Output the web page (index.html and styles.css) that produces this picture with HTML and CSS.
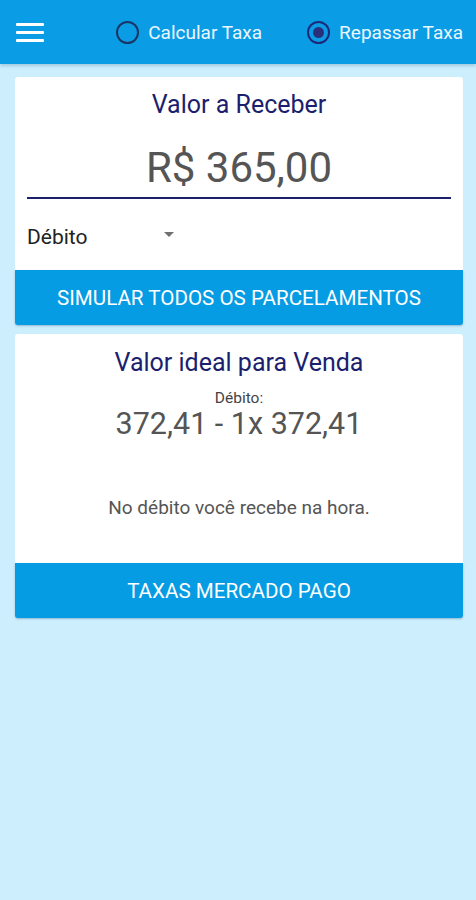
FILE: index.html
```html
<!DOCTYPE html>
<html lang="pt-BR">
<head>
  <meta charset="UTF-8" />
  <meta name="viewport" content="width=device-width, initial-scale=1.0"/>
  <title>Taxas Mercado Pago</title>
  <link rel="stylesheet" href="styles.css">
</head>
<body>
  <header class="topbar">
    <button class="menu-btn" aria-label="Menu">
      <span></span><span></span><span></span>
    </button>
    <div class="modes">
      <label class="mode">
        <span class="radio"></span>
        Calcular Taxa
      </label>
      <label class="mode">
        <span class="radio checked"></span>
        Repassar Taxa
      </label>
    </div>
  </header>

  <main class="content">
    <section class="card">
      <h2 class="card-title">Valor a Receber</h2>
      <div class="amount-field">R$ 365,00</div>
      <div class="select-row">
        <span class="select-value">Débito</span>
        <span class="select-arrow"></span>
      </div>
    </section>
    <button class="action-btn">SIMULAR TODOS OS PARCELAMENTOS</button>

    <section class="card result">
      <h2 class="card-title">Valor ideal para Venda</h2>
      <div class="result-label">Débito:</div>
      <div class="result-value">372,41 - 1x 372,41</div>
      <p class="result-note">No débito você recebe na hora.</p>
    </section>
    <button class="action-btn">TAXAS MERCADO PAGO</button>
  </main>
</body>
</html>
```

FILE: styles.css
```css
body {
  font-family: Roboto, 'Noto Sans', sans-serif;
  background-color: #cdeefd;
  margin: 0;
  min-height: 900px;
}

.topbar {
  height: 64px;
  background-color: #0a9de5;
  display: flex;
  align-items: center;
  padding: 0 13px 0 16px;
  box-shadow: 0 2px 3px rgba(0, 60, 110, 0.2);
}

.menu-btn {
  background: none;
  border: none;
  padding: 0;
  width: 28px;
  display: flex;
  flex-direction: column;
  gap: 5px;
  cursor: pointer;
}

.menu-btn span {
  display: block;
  height: 3px;
  background-color: #ffffff;
  border-radius: 1px;
}

.modes {
  margin-left: auto;
  display: flex;
  gap: 45px;
}

.mode {
  display: flex;
  align-items: center;
  gap: 9px;
  color: #eaf7ff;
  font-size: 19px;
}

.radio {
  width: 19px;
  height: 19px;
  border: 2px solid #1b3564;
  border-radius: 50%;
  box-sizing: content-box;
  display: flex;
  align-items: center;
  justify-content: center;
}

.radio.checked {
  border-color: #1d2a7a;
}

.radio.checked::after {
  content: "";
  width: 11px;
  height: 11px;
  border-radius: 50%;
  background-color: #2a2f7c;
}

.content {
  padding: 13px 13px 0 15px;
}

.card {
  background-color: #ffffff;
  border-radius: 3px 3px 0 0;
  padding: 14px 12px 0;
  text-align: center;
}

.card-title {
  margin: 0;
  font-weight: normal;
  font-size: 25px;
  line-height: 28px;
  color: #1c1f6e;
}

.amount-field {
  font-size: 42px;
  line-height: 48px;
  color: #555555;
  margin-top: 25px;
  padding-bottom: 5px;
  border-bottom: 2px solid #1c1f6e;
}

.select-row {
  display: flex;
  align-items: center;
  height: 67px;
  padding-top: 4px;
  text-align: left;
}

.select-value {
  font-size: 21px;
  color: #222222;
  width: 137px;
}

.select-arrow {
  width: 0;
  height: 0;
  border-left: 5px solid transparent;
  border-right: 5px solid transparent;
  border-top: 5px solid #707070;
  margin-top: -4px;
}

.action-btn {
  display: block;
  width: 100%;
  height: 55px;
  background-color: #069ce3;
  color: #ffffff;
  border: none;
  border-radius: 0 0 3px 3px;
  font-family: Roboto, sans-serif;
  font-size: 20.6px;
  box-shadow: 0 1px 2px rgba(0, 60, 110, 0.3);
  margin-bottom: 9px;
  cursor: pointer;
}

.result {
  padding-top: 15px;
  height: 214px;
}

.result-label {
  font-size: 15.5px;
  color: #444444;
  margin-top: 12px;
  line-height: 18px;
}

.result-value {
  font-size: 30.5px;
  line-height: 34px;
  color: #555555;
}

.result-note {
  margin: 56px 0 0;
  font-size: 19px;
  line-height: 22px;
  color: #555555;
}
```
